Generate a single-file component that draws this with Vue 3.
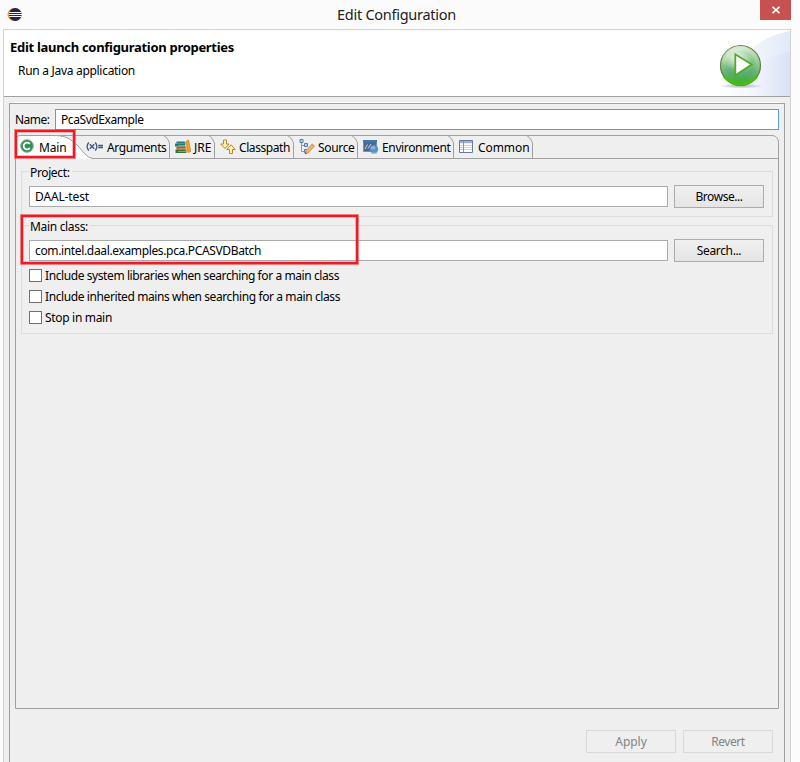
<script setup>
const tabs = [
  { name: 'Arguments', icon: 'args', width: 89, text: 59.5 },
  { name: 'JRE', icon: 'books', width: 45, text: 17.5 },
  { name: 'Classpath', icon: 'path', width: 79, text: 51 },
  { name: 'Source', icon: 'source', width: 64, text: 36.5 },
  { name: 'Environment', icon: 'env', width: 96, text: 68.5 },
  { name: 'Common', icon: 'table', width: 79, text: 51.5 },
]
const options = [
  { label: 'Include system libraries when searching for a main class', text: 294 },
  { label: 'Include inherited mains when searching for a main class', text: 295 },
  { label: 'Stop in main', text: 67 },
]

// Tracks a label so that it occupies the given width in pixels.
const vFit = {
  mounted(el, { value }) {
    const natural = el.getBoundingClientRect().width
    el.style.letterSpacing = (value - natural) / el.textContent.length + 'px'
  },
}
</script>

<template>
  <div class="window">
    <header class="titlebar">
      <svg class="logo" width="16" height="16" viewBox="0 0 16 16">
        <circle cx="7" cy="7.5" r="6.5" fill="#f7941e" />
        <circle cx="8.3" cy="7.5" r="6.5" fill="#2c2255" />
        <path d="M2 5.5h12.5M1.5 7.5h13.5M2 9.5h12.5" stroke="#fff" stroke-width="1" />
      </svg>
      <h1><span v-fit="119">Edit Configuration</span></h1>
      <button class="close">
        <svg width="8" height="8" viewBox="0 0 8 8"><path d="M.5.8 7.5 7.2M7.5.8.5 7.2" stroke="#fff" stroke-width="1.8" /></svg>
      </button>
    </header>

    <main class="frame">
      <section class="banner">
        <div class="heading">
          <h2><span v-fit="224">Edit launch configuration properties</span></h2>
          <p><span v-fit="117">Run a Java application</span></p>
        </div>
        <svg class="art" width="130" height="66" viewBox="0 0 130 66">
          <defs>
            <linearGradient id="sweep" x1="0" x2="1"><stop offset="0" stop-color="#fff" /><stop offset="1" stop-color="#e2e9f8" /></linearGradient>
            <linearGradient id="sweep2" x1="0" x2="1"><stop offset="0" stop-color="#f8faff" /><stop offset="1" stop-color="#dae2f5" /></linearGradient>
            <linearGradient id="ball" x1="0" y1="0" x2="0" y2="1"><stop offset="0" stop-color="#d2ead0" /><stop offset=".38" stop-color="#9bcf98" /><stop offset=".7" stop-color="#60b272" /><stop offset="1" stop-color="#37b40b" /></linearGradient>
            <radialGradient id="glow"><stop offset="0" stop-color="#fff" stop-opacity=".75" /><stop offset="1" stop-color="#fff" stop-opacity="0" /></radialGradient>
            <radialGradient id="shade"><stop offset="0" stop-color="#8c949c" stop-opacity=".75" /><stop offset="1" stop-color="#8c949c" stop-opacity="0" /></radialGradient>
          </defs>
          <path d="M62 66Q80 10 130 1V66Z" fill="url(#sweep)" />
          <path d="M84 66Q88 27 130 22V66Z" fill="url(#sweep2)" />
          <ellipse cx="81" cy="56" rx="22" ry="2.5" fill="url(#shade)" />
          <circle cx="80.5" cy="35.5" r="20" fill="url(#ball)" stroke="#6a7f42" stroke-width="1.2" />
          <circle cx="80.5" cy="35.5" r="15" fill="#3f9d63" opacity=".18" />
          <ellipse cx="76" cy="27" rx="16" ry="13" fill="url(#glow)" />
          <path d="M64 47Q80 62 97 47" fill="none" stroke="#42c900" stroke-width="2.5" opacity=".7" />
          <path d="M75.3 24.3V45.3L91.7 34.5Z" fill="#fff" stroke="#56aa2a" stroke-width="1.8" />
        </svg>
      </section>

      <section class="body">
        <div class="name-row">
          <label><span v-fit="34.5">Name:</span></label>
          <div class="field focused"><span v-fit="82.5">PcaSvdExample</span></div>
        </div>

        <div class="panel">
          <nav class="tabs">
            <div class="tab active">
              <svg class="curve" width="78" height="24" viewBox="0 0 78 24">
                <path d="M0 24V6Q0 .5 6 .5H38C50 .5 55 3 63 11L69 18Q74 23.5 78 23.5V24Z" fill="#fff" />
                <path d="M.5 24V6Q.5 .5 6 .5H38C50 .5 55 3 63 11L69 18Q74 23.5 78 23.5" fill="none" stroke="#a0a0a0" />
              </svg>
              <svg class="main-icon" width="14" height="14" viewBox="0 0 14 14">
                <circle cx="7" cy="7" r="6.3" fill="#348b55" stroke="#7ab58b" />
                <path d="M9.8 5A3.4 3.4 0 1 0 9.8 9" fill="none" stroke="#fff" stroke-width="1.8" />
              </svg>
              <span v-fit="27.5" class="caption">Main</span>
              <i class="mark mark-tab"></i>
            </div>
            <div v-for="tab in tabs" :key="tab.name" class="tab" :style="{ width: tab.width + 'px' }">
              <svg class="edge" width="8" height="23" viewBox="0 0 8 23"><path d="M3 0H8V6Z" fill="#efefef" /><path d="M0 .5H8M1.5 .5Q4 1.5 5.5 4T7.5 8V23" fill="none" stroke="#a0a0a0" /></svg>
              <svg v-if="tab.icon === 'args'" class="icon" width="17" height="16" viewBox="0 0 17 16">
                <path d="M2.8 3.5Q-.6 7.5 2.8 11.5M9.2 3.5Q12.6 7.5 9.2 11.5M12.3 6.5H17M12.3 8.5H17" fill="none" stroke="#465575" stroke-width="1.3" />
                <path d="M3.8 5.3 8.2 9.7M8.2 5.3 3.8 9.7" stroke="#3f628f" stroke-width="1.6" />
              </svg>
              <svg v-else-if="tab.icon === 'books'" class="icon" width="16" height="16" viewBox="0 0 16 16">
                <path d="M1.5 2.5H9.5L11 4.5H1.5Z" fill="#26778c" /><path d="M0 4.5H10V7.5H0Z" fill="#168081" /><path d="M3 6.5H10" stroke="#8cc5b8" stroke-width=".7" />
                <path d="M1.5 7.5H11V10.5H1.5Z" fill="#a95e2c" /><path d="M3.5 9.4H11" stroke="#dfa870" stroke-width=".7" /><path d="M.5 10.5H11.5V14H.5Z" fill="#39713e" /><path d="M3 12.5H11" stroke="#9fc08c" stroke-width=".7" />
                <path d="M11 2.5 13.5 1 15.8 12.5 13 13.5Z" fill="#f4a51d" stroke="#b96b15" stroke-width=".6" /><path d="M11 4V12" stroke="#e5a233" />
              </svg>
              <svg v-else-if="tab.icon === 'path'" class="icon" width="16" height="16" viewBox="0 0 16 16">
                <path d="M3.5 1H6.5V5H9L5 9.5.8 5H3.5ZM9.5 14.5H12.5V10.5H15.2L11 5.8 6.8 10.5H9.5Z" fill="#fff1ae" stroke="#b88a27" />
              </svg>
              <svg v-else-if="tab.icon === 'source'" class="icon" width="16" height="16" viewBox="0 0 16 16">
                <path d="M2.5 4V12.5H6M2.5 6.5H6" fill="none" stroke="#7f9abc" /><path d="M1 .5H4V3.5H1ZM5.5 4.5H8.5V7.5H5.5ZM5.5 10.5H8V13.5H5.5Z" fill="#b9cfe8" stroke="#557dae" />
                <path d="M6 15 7 11.5 13 5.2 15.2 7.5 9 14Z" fill="#eeb667" stroke="#ba7e4a" stroke-width=".7" /><path d="M13 5.2 15.2 7.5" stroke="#d3979b" stroke-width="1.7" /><path d="M6 15 6.5 13 8 14.4Z" fill="#555" />
              </svg>
              <svg v-else-if="tab.icon === 'env'" class="icon" width="16" height="16" viewBox="0 0 16 16">
                <path d="M.5 1.5H13.5V12.5H.5Z" fill="#4d6989" stroke="#7591ab" /><path d="M0 1H14V3.5H0Z" fill="#3c79b2" /><path d="M2 10 4.5 5.5M5 9.5 8 5" stroke="#c5d3dc" fill="none" /><circle cx="11" cy="10.2" r="4.2" fill="#5c91c8" /><ellipse cx="10" cy="8.7" rx="2.3" ry="1.5" fill="#8eb7e0" /><path d="M8 14H14" stroke="#8db6da" />
              </svg>
              <svg v-else class="icon" width="16" height="16" viewBox="0 0 16 16">
                <path d="M.5 1.5H13.5V13.5H.5Z" fill="#fff" stroke="#65799f" /><path d="M1 2H13V4.2H1Z" fill="#9eafd0" /><path d="M4.5 4V13M1 6.5H13M1 8.5H13M1 10.5H13" stroke="#cbd3e2" /><path d="M4.5 2V13" stroke="#8294b2" />
              </svg>
              <span v-fit="tab.text" class="caption">{{ tab.name }}</span>
            </div>
            <div class="tab-rest"></div>
          </nav>

          <div class="content">
            <section class="group project">
              <h3><span v-fit="39.5">Project:</span></h3>
              <div class="row">
                <div class="field"><span v-fit="54">DAAL-test</span></div>
                <button><span v-fit="47">Browse...</span></button>
              </div>
            </section>
            <section class="group main-class">
              <h3><span v-fit="58">Main class:</span></h3>
              <div class="row">
                <div class="field"><span v-fit="226">com.intel.daal.examples.pca.PCASVDBatch</span></div>
                <button><span v-fit="44.5">Search...</span></button>
              </div>
              <ul>
                <li v-for="o in options" :key="o.label"><i class="box"></i><span v-fit="o.text">{{ o.label }}</span></li>
              </ul>
              <i class="mark mark-class"></i>
            </section>
          </div>
        </div>

        <footer>
          <button disabled><span v-fit="31.5">Apply</span></button>
          <button disabled><span v-fit="33.5">Revert</span></button>
        </footer>
      </section>
    </main>
  </div>
</template>

<style>
body { background: #fdfdfd; overflow: hidden; }
</style>

<style scoped>
* { box-sizing: border-box; margin: 0; padding: 0; }
.window { width: 800px; height: 762px; display: flex; flex-direction: column; background: #fcfcfc; color: #000; font: 12px/16px "Noto Sans", "Open Sans", sans-serif; white-space: nowrap; overflow: hidden; }
span { display: inline-block; }
svg { display: block; flex: none; }
.titlebar { height: 29px; width: 791px; display: flex; justify-content: space-between; align-items: flex-start; background: #fbfbfb; }
.logo { margin: 7px 0 0 7px; }
h1 { font-size: 14.5px; line-height: 20px; font-weight: 400; margin: 4px 0 0 10px; color: #222; }
.titlebar .close { width: 31px; height: 20px; border: 0; background: #c75050; display: flex; justify-content: center; align-items: center; }
.frame { width: 788px; margin-left: 3px; flex: 1; display: flex; flex-direction: column; background: #efefef; border: 1px solid #d2d2d2; border-bottom: 0; }
.banner { height: 67px; background: #fff; border-bottom: 1px solid #a0a0a0; display: flex; justify-content: space-between; overflow: hidden; }
.heading { padding: 9px 0 0 6px; }
h2 { font-size: 13px; line-height: 17px; font-weight: 700; }
.heading p { margin: 7px 0 0 8px; }
.body { margin: 6px 5px 0; flex: 1; display: flex; flex-direction: column; border: 1px solid #a0a0a0; border-bottom: 0; padding: 5px 5px 0; box-shadow: 0 -6px 0 -5px #fff; }
.name-row { height: 21px; display: flex; align-items: center; justify-content: space-between; }
.field { height: 21px; background: #fff; border: 1px solid #ababab; padding: 2px 5px; }
.focused { width: 724px; border-color: #569de5; }
.panel { height: 574px; margin-top: 5px; border: 1px solid #a0a0a0; border-radius: 7px 7px 0 0; }
.tabs { height: 23px; margin: -1px 0 0 -1px; display: flex; }
.tab { position: relative; height: 24px; display: flex; align-items: flex-start; border-bottom: 1px solid #a0a0a0; }
.tab.active { z-index: 1; width: 66px; border-bottom: 0; padding-left: 5px; }
.curve { position: absolute; left: 0; top: 0; }
.edge { position: absolute; right: 0; top: 0; }
.main-icon { position: relative; margin-top: 4px; }
.caption { position: relative; margin-top: 5px; }
.active .caption { margin-left: 5px; }
.icon { position: relative; margin: 4px 3px 0 5px; }
.tab:nth-child(2) .icon { margin-right: 4px; }
.tab-rest { flex: 1; height: 24px; border-bottom: 1px solid #a0a0a0; }
.content { padding: 13px 5px 0; }
.group { position: relative; border: 1px solid #dcdcdc; padding: 0 8px 0 7px; }
.project { height: 46px; margin-bottom: 8px; }
.main-class { height: 109px; }
h3 { width: max-content; height: 13px; margin-top: -7px; padding: 0 2px 0 1px; font-size: 12px; line-height: 15px; font-weight: 400; background: #efefef; }
.row { display: flex; gap: 6px; align-items: center; margin-top: 7px; }
.row .field { flex: 1; }
button { width: 90px; height: 23px; border: 1px solid #acacac; background: linear-gradient(#f0f0f0, #e5e5e5); color: #000; font: inherit; }
ul { list-style: none; padding-top: 3px; }
li { display: flex; align-items: center; gap: 3px; height: 21px; }
.box { width: 13px; height: 13px; background: #fff; border: 1px solid #707070; }
.mark { position: absolute; border: 2px solid #ed1c24; box-shadow: 0 0 0 .5px #f3777c, inset 0 0 0 .5px #f3777c; outline: 1px solid rgba(237, 28, 36, .35); }
.mark-tab { left: 0; top: -5px; width: 60px; height: 28px; }
.mark-class { left: -1px; top: -11px; width: 337px; height: 49px; }
footer { display: flex; justify-content: flex-end; gap: 7px; margin: 21px 6px 0 0; }
footer button { border-color: #d9d9d9; background: #efefef; color: #838383; }
</style>
